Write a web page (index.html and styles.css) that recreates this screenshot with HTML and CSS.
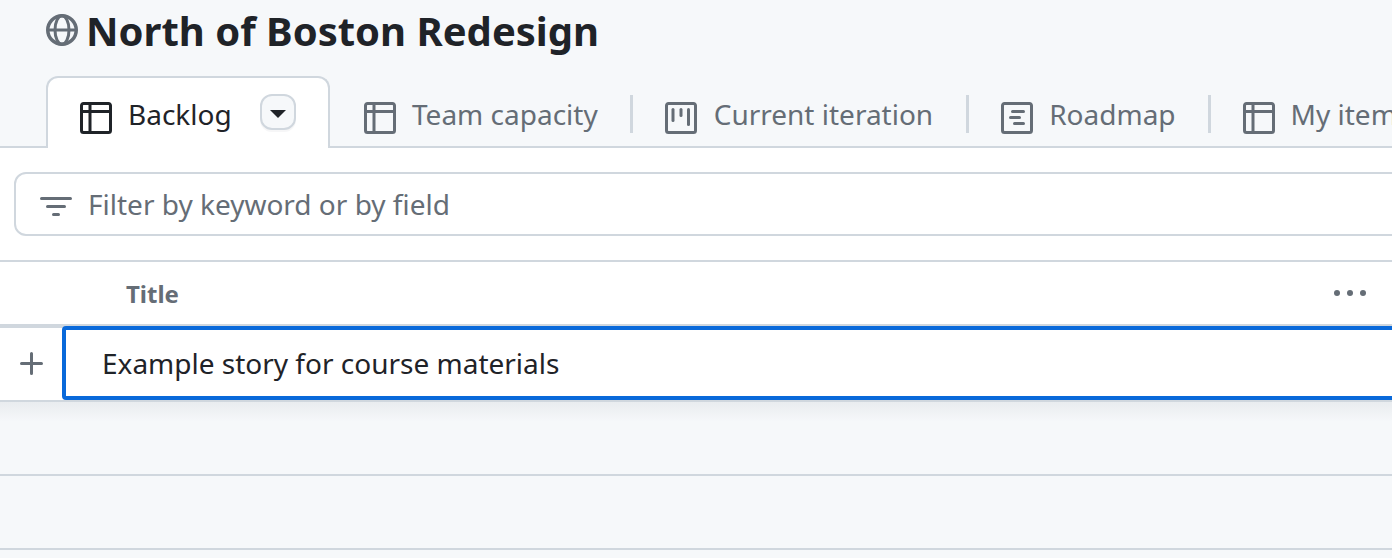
FILE: index.html
```html
<!DOCTYPE html>
<html>
<head>
  <meta charset="utf8">
  <title>North of Boston Redesign</title>
  <link rel="stylesheet" href="styles.css">
</head>
<body>

<div class="app">
  <div class="project-head">
    <svg class="globe" viewBox="0 0 32 32" fill="none" stroke="currentColor">
      <circle cx="16" cy="16" r="14.25" stroke-width="3.5"/>
      <ellipse cx="16" cy="16" rx="7" ry="14.25" stroke-width="3"/>
      <path d="M2 16h28" stroke-width="3"/>
    </svg>
    <h1 class="project-title">North of Boston Redesign</h1>
  </div>

  <div class="tabs">
    <div class="tab tab-active">
      <svg class="icon" viewBox="0 0 16 16"><path fill-rule="evenodd" d="M1.75 0h12.5C15.216 0 16 .784 16 1.75v12.5A1.75 1.75 0 0 1 14.25 16H1.75A1.75 1.75 0 0 1 0 14.25V1.75C0 .784.784 0 1.75 0ZM1.5 4h2.75V1.5h-2.5a.25.25 0 0 0-.25.25Zm4.25 0h8.75V1.75a.25.25 0 0 0-.25-.25h-8.5Zm-4.25 1.5v8.75c0 .138.112.25.25.25h2.5v-9Zm4.25 0v9h8.5a.25.25 0 0 0 .25-.25V5.5Z"/></svg>
      <span>Backlog</span>
      <button class="tab-menu"><i class="caret"></i></button>
    </div>
    <div class="tab tab-first">
      <svg class="icon" viewBox="0 0 16 16"><path fill-rule="evenodd" d="M1.75 0h12.5C15.216 0 16 .784 16 1.75v12.5A1.75 1.75 0 0 1 14.25 16H1.75A1.75 1.75 0 0 1 0 14.25V1.75C0 .784.784 0 1.75 0ZM1.5 4h2.75V1.5h-2.5a.25.25 0 0 0-.25.25Zm4.25 0h8.75V1.75a.25.25 0 0 0-.25-.25h-8.5Zm-4.25 1.5v8.75c0 .138.112.25.25.25h2.5v-9Zm4.25 0v9h8.5a.25.25 0 0 0 .25-.25V5.5Z"/></svg>
      <span>Team capacity</span>
    </div>
    <i class="tab-sep"></i>
    <div class="tab tab-iteration">
      <svg class="icon" viewBox="0 0 16 16"><path d="M1.75 0h12.5C15.216 0 16 .784 16 1.75v12.5A1.75 1.75 0 0 1 14.25 16H1.75A1.75 1.75 0 0 1 0 14.25V1.75C0 .784.784 0 1.75 0Zm0 1.5a.25.25 0 0 0-.25.25v12.5c0 .138.112.25.25.25h12.5a.25.25 0 0 0 .25-.25V1.75a.25.25 0 0 0-.25-.25Z"/><rect x="3.25" y="3" width="1.5" height="7" rx=".75"/><rect x="7.25" y="3" width="1.5" height="4.5" rx=".75"/><rect x="11" y="3" width="1.5" height="9" rx=".75"/></svg>
      <span>Current iteration</span>
    </div>
    <i class="tab-sep"></i>
    <div class="tab">
      <svg class="icon" viewBox="0 0 16 16"><path d="M4.75 7a.75.75 0 0 0 0 1.5h4.5a.75.75 0 0 0 0-1.5h-4.5ZM5 4.75A.75.75 0 0 1 5.75 4h5.5a.75.75 0 0 1 0 1.5h-5.5A.75.75 0 0 1 5 4.75ZM6.75 10a.75.75 0 0 0 0 1.5h4.5a.75.75 0 0 0 0-1.5h-4.5Z"/><path d="M0 1.75C0 .784.784 0 1.75 0h12.5C15.216 0 16 .784 16 1.75v12.5A1.75 1.75 0 0 1 14.25 16H1.75A1.75 1.75 0 0 1 0 14.25Zm1.75-.25a.25.25 0 0 0-.25.25v12.5c0 .138.112.25.25.25h12.5a.25.25 0 0 0 .25-.25V1.75a.25.25 0 0 0-.25-.25Z"/></svg>
      <span>Roadmap</span>
    </div>
    <i class="tab-sep"></i>
    <div class="tab">
      <svg class="icon" viewBox="0 0 16 16"><path fill-rule="evenodd" d="M1.75 0h12.5C15.216 0 16 .784 16 1.75v12.5A1.75 1.75 0 0 1 14.25 16H1.75A1.75 1.75 0 0 1 0 14.25V1.75C0 .784.784 0 1.75 0ZM1.5 4h2.75V1.5h-2.5a.25.25 0 0 0-.25.25Zm4.25 0h8.75V1.75a.25.25 0 0 0-.25-.25h-8.5Zm-4.25 1.5v8.75c0 .138.112.25.25.25h2.5v-9Zm4.25 0v9h8.5a.25.25 0 0 0 .25-.25V5.5Z"/></svg>
      <span>My items</span>
    </div>
  </div>

  <div class="filter-bar">
    <div class="filter-input">
      <svg class="icon" viewBox="0 0 16 16"><path d="M.75 3h14.5a.75.75 0 0 1 0 1.5H.75a.75.75 0 0 1 0-1.5ZM3 7.75A.75.75 0 0 1 3.75 7h8.5a.75.75 0 0 1 0 1.5h-8.5A.75.75 0 0 1 3 7.75Zm3 4a.75.75 0 0 1 .75-.75h2.5a.75.75 0 0 1 0 1.5h-2.5a.75.75 0 0 1-.75-.75Z"/></svg>
      <span>Filter by keyword or by field</span>
    </div>
  </div>

  <div class="grid-head">
    <span class="col-title">Title</span>
    <svg class="kebab" viewBox="0 0 36 8"><circle cx="4" cy="4" r="3"/><circle cx="17" cy="4" r="3"/><circle cx="30" cy="4" r="3"/></svg>
  </div>

  <div class="grid-row">
    <div class="row-add">
      <svg class="icon-plus" viewBox="0 0 16 16"><path d="M7.75 2a.75.75 0 0 1 .75.75V7h4.25a.75.75 0 0 1 0 1.5H8.5v4.25a.75.75 0 0 1-1.5 0V8.5H2.75a.75.75 0 0 1 0-1.5H7V2.75A.75.75 0 0 1 7.75 2Z"/></svg>
    </div>
    <div class="row-cell">Example story for course materials</div>
  </div>

  <div class="grid-empty grid-empty-first"></div>
  <div class="grid-empty"></div>
</div>

</body>
</html>
```

FILE: styles.css
```css
html, body { padding: 0; margin: 0; }
body { background: #f6f8fa; font-family: "Noto Sans", sans-serif; color: #1f2328; overflow: hidden; }
.app { width: 1392px; height: 558px; overflow: hidden; }

.project-head { display: flex; align-items: center; height: 76px; padding: 0 0 14px 46px; box-sizing: border-box; gap: 8px; }
.globe { width: 32px; height: 32px; margin-top: -2px; color: #656d76; flex: none; }
.project-title { margin: 0; font-size: 40px; line-height: 62px; font-weight: 700; }

.tabs { display: flex; align-items: flex-start; height: 72px; box-sizing: border-box; padding-left: 46px; border-bottom: 2px solid #d0d7de; white-space: nowrap; font-size: 28px; color: #656d76; }
.tab { display: flex; align-items: center; flex: none; gap: 16px; padding: 6px 32px 0; height: 70px; box-sizing: border-box; }
.tab .icon { width: 32px; height: 32px; margin-top: 8px; fill: #656d76; flex: none; }
.tab-first { margin-left: 2px; }
.tab-iteration { gap: 17px; padding-right: 33px; }
.tab-active { height: 72px; width: 284px; padding: 4px 32px 2px; background: #fff; border: 2px solid #d0d7de; border-bottom: 0; border-radius: 12px 12px 0 0; color: #1f2328; }
.tab-active .icon { fill: #1f2328; }
.tab-sep { flex: none; width: 3px; height: 38px; margin-top: 19px; background: #d0d7de; }
.tab-menu { display: flex; align-items: center; justify-content: center; flex: none; width: 36px; height: 36px; margin: 0 0 4px 12px; padding: 0; background: #f6f8fa; border: 2px solid #d0d7de; border-radius: 12px; box-sizing: border-box; box-shadow: 0 2px 0 rgba(31, 35, 40, .04); }
.caret { width: 0; height: 0; margin-top: 4px; border: 8px solid transparent; border-top: 8px solid #1f2328; border-bottom: 0; }

.filter-bar { height: 112px; box-sizing: border-box; padding: 24px 0 24px 14px; background: #fff; }
.filter-input { display: flex; align-items: center; gap: 16px; width: 1500px; height: 64px; box-sizing: border-box; padding-left: 24px; border: 2px solid #d0d7de; border-radius: 12px; font-size: 28px; color: #656d76; }
.filter-input .icon { width: 32px; height: 32px; margin-top: 6px; fill: #656d76; flex: none; }

.grid-head { display: flex; align-items: center; justify-content: space-between; height: 66px; box-sizing: border-box; padding: 0 23px 0 126px; background: #fff; border-top: 2px solid #d0d7de; border-bottom: 2px solid #d0d7de; }
.col-title { font-size: 24px; font-weight: 700; color: #656d76; }
.kebab { width: 36px; height: 8px; fill: #656d76; }

.grid-row { display: flex; height: 76px; box-sizing: border-box; background: #fff; border-top: 2px solid #d0d7de; border-bottom: 2px solid #d0d7de; }
.row-add { display: flex; align-items: center; justify-content: center; width: 62px; padding-left: 2px; box-sizing: border-box; flex: none; }
.icon-plus { width: 32px; height: 32px; fill: #656d76; }
.row-cell { flex: none; width: 1500px; height: 74px; margin-top: -2px; box-sizing: border-box; padding-left: 36px; border: 4px solid #0969da; border-radius: 4px; font-size: 28px; line-height: 66px; }

.grid-empty { height: 74px; box-sizing: border-box; border-bottom: 2px solid #d0d7de; }
.grid-empty-first { background: linear-gradient(#e9ecef, #f6f8fa 20px); }
```
